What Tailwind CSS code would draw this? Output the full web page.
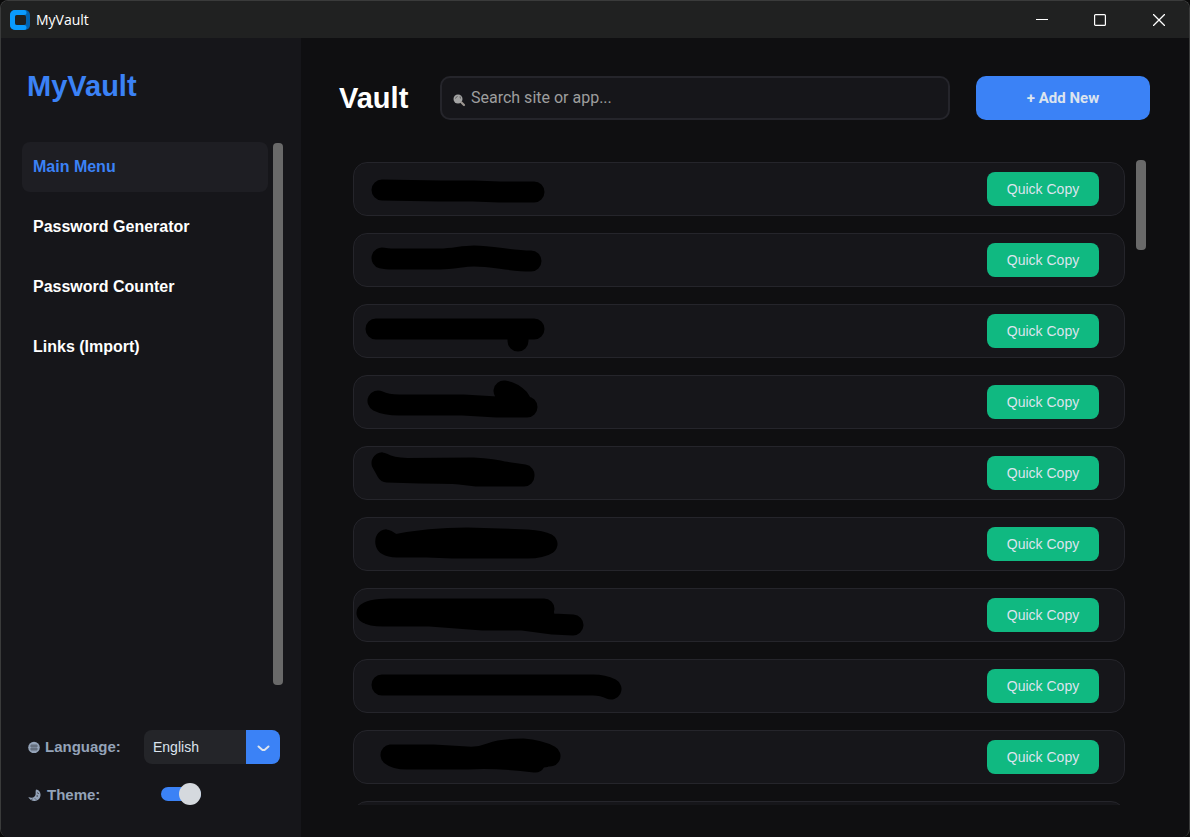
<!DOCTYPE html>
<html lang="en">
<head>
  <meta charset="UTF-8">
  <meta name="viewport" content="width=device-width, initial-scale=1.0">
  <title>MyVault</title>
  <script src="https://cdn.jsdelivr.net/npm/@tailwindcss/browser@4"></script>
</head>
<body class="bg-[#0a0a0a] font-['Liberation_Sans',Arial,sans-serif]">
<div class="h-screen flex flex-col overflow-hidden rounded-lg border border-[#3a3b3b] border-b-0 bg-[#0f0f11] text-white">

  <!-- Title bar -->
  <header class="flex h-[37px] shrink-0 items-center bg-[#202121] pl-2">
    <svg class="size-[22px]" viewBox="0 0 22 22">
      <rect x="1" y="1" width="20" height="20" rx="5" fill="#0062b1"/>
      <path d="M6 1h9a2.500 2.500 0 0 1 0 5H8a2 2 0 0 0-2 2v6a2 2 0 0 0 2 2h7a2.500 2.500 0 0 1 0 5H6a5 5 0 0 1-5-5V6a5 5 0 0 1 5-5z" fill="#0a9bff"/>
      <rect x="6" y="6" width="11" height="10" rx="2" fill="#202121"/>
    </svg>
    <span class="ml-[5px] flex-1 font-['Open_Sans',sans-serif] text-sm">MyVault</span>
    <button aria-label="Minimize" class="flex h-full w-[58px] items-center justify-center">
      <svg class="size-3" viewBox="0 0 12 12" stroke="#fff"><path d="M0 5.500h12"/></svg>
    </button>
    <button aria-label="Maximize" class="flex h-full w-[58px] items-center justify-center">
      <svg class="size-3" viewBox="0 0 12 12" fill="none" stroke="#fff" stroke-width="1.200"><rect x=".6" y=".6" width="10.800" height="10.800" rx="1"/></svg>
    </button>
    <button aria-label="Close" class="flex h-full w-[60px] items-center justify-center">
      <svg class="size-3" viewBox="0 0 12 12" stroke="#fff" stroke-width="1.300"><path d="M0 0l12 12M12 0L0 12"/></svg>
    </button>
  </header>

  <div class="flex min-h-0 flex-1">
    <!-- Sidebar -->
    <aside class="flex w-[300px] shrink-0 flex-col bg-[#16161a]">
      <h1 class="px-[26px] pt-8 text-[29px]/8 font-bold text-[#3b82f6]">MyVault</h1>
      <div class="mt-10 mb-11 flex min-h-0 flex-1 gap-[5px] pl-[21px]">
        <nav class="flex w-[246px] flex-col gap-2.5 font-bold">
          <a href="#" class="flex h-[50px] items-center rounded-lg bg-[#1e1e23] px-[11px] text-[#3b82f6]">Main Menu</a>
          <a href="#" class="flex h-[50px] items-center rounded-lg px-[11px]">Password Generator</a>
          <a href="#" class="flex h-[50px] items-center rounded-lg px-[11px]">Password Counter</a>
          <a href="#" class="flex h-[50px] items-center rounded-lg px-[11px]">Links (Import)</a>
        </nav>
        <div class="my-px w-2.5 rounded bg-[#696969]"></div>
      </div>
      <div class="flex flex-col gap-[14px] pr-[21px] pb-[25px] pl-5 text-sm">
        <div class="flex h-[34px] items-center justify-between">
          <label for="language" class="flex items-center gap-[5px] pl-[7px] text-[15px] font-bold text-[#94a3b8]">
            <svg class="size-3" viewBox="0 0 12 12" fill="none">
              <circle cx="6" cy="6.500" r="5.800" fill="#94a3b8"/>
              <path d="M2 5h8M2 8h8M4 3v7M6 3v7M8 3v7" stroke="#16161a" stroke-opacity=".5" stroke-width=".8"/>
            </svg>
            Language:
          </label>
          <div class="relative w-[136px]">
            <select id="language" class="h-[34px] w-full appearance-none rounded-lg bg-[#242529] pl-[9px] text-[#dce4ee]">
              <option>English</option>
            </select>
            <span class="pointer-events-none absolute inset-y-0 right-0 flex w-[34px] items-center justify-center rounded-r-lg bg-[#3b82f6]">
              <svg class="mt-0.5 h-[7px] w-[13px]" viewBox="0 0 13 7" fill="none" stroke="#dce4ee" stroke-width="2" stroke-linecap="round" stroke-linejoin="round"><path d="M1.500 1.500l4 3.500h2l4-3.500"/></svg>
            </span>
          </div>
        </div>
        <div class="flex h-[34px] items-center">
          <label for="theme" class="flex w-[140px] items-center gap-[6px] pl-[7px] text-[15px] font-bold text-[#94a3b8]">
            <svg class="mt-0.5 size-[13px]" viewBox="0 0 13 13" fill="none">
              <path d="M8 .5C12 1 13.500 5 12 8.500C10 13 3 13.500 .3 8C3 9 5 9 6.500 7.500C8.500 5.500 7 3 8 .5z" fill="#94a3b8"/>
              <path d="M9.500 3.500l1 1.500M10 7H8.500M7 9.500l1 1M4.500 10l-1 .5" stroke="#16161a" stroke-width=".8"/>
            </svg>
            Theme:
          </label>
          <input id="theme" type="checkbox" checked class="relative -mt-0.5 h-[14px] w-10 appearance-none rounded-full bg-[#4a4d50] checked:bg-[#3b82f6] before:absolute before:-top-1 before:left-0 before:size-[22px] before:rounded-full before:bg-[#d5d9de] checked:before:left-[18px]">
        </div>
      </div>
    </aside>

    <!-- Vault -->
    <main class="flex min-w-0 flex-1 flex-col pt-[38px] pr-[39px] pb-8 pl-[38px]">
      <div class="flex items-center">
        <h2 class="w-[101px] text-[29px]/8 font-bold">Vault</h2>
        <div class="flex h-11 flex-1 items-center gap-[5px] rounded-[10px] border-2 border-[#25252b] bg-[#16161a] px-[11px]">
          <svg class="mt-1 size-[13px]" viewBox="0 0 13 13" fill="none">
            <circle cx="5" cy="5" r="4.500" fill="#a3a3a3"/>
            <path d="M8.500 8.500l2.500 2.500" stroke="#9c9690" stroke-width="2.200" stroke-linecap="round"/>
            <path d="M2.500 4.500a3 3 0 0 1 2-2M7 2.500l.5 2" stroke="#5a5a5a"/>
          </svg>
          <input type="search" aria-label="Search" placeholder="Search site or app..." class="min-w-0 flex-1 bg-transparent font-[Roboto,sans-serif] text-base placeholder:text-[#9e9e9e] focus:outline-none">
        </div>
        <button class="ml-[26px] h-11 w-[174px] rounded-[10px] bg-[#3b82f6] font-[Roboto,sans-serif] text-[15px] font-bold text-[#dce4ee]">+ Add New</button>
      </div>
      <div class="mt-10 flex min-h-0 flex-1 gap-[11px] pr-1 pl-[14px]">
        <ul id="vaultList" class="flex min-w-0 flex-1 flex-col gap-[17px] overflow-hidden pt-0.5"></ul>
        <div class="h-[90px] w-2.5 rounded bg-[#696969]"></div>
      </div>
    </main>
  </div>
</div>

<script>
// marker strokes that hide each entry name
const entries = [
  "M28 27L86 28H119L146 29H180",
  "M28 24Q32 25 40 25H86C100 25 108 22 120 22C140 22 155 27 177 27",
  "M22 24H180M164 25V36",
  "M24 25Q32 29 45 29H109L143 31L173 31M150 15Q158 16 165 23L170 31",
  "M28 16L33 25L66 26Q95 26 106 27L123 29H170M28 16Q36 21 53 21.500L119 21Q140 22 150 25L170 28",
  "M32 22Q30 29 43 29L73 29L99 30H173Q187 30 193 26M32 22L40 27Q75 20 113 20L146 21L173 22Q187 23 193 26M50 26H185",
  "M13 24Q17 20 36 20H190M13 24Q18 27 29 27H76L129 31H169L199 35L219 36M100 26H190",
  "M28 25H239Q249 25 257 29",
  "M37 24H79L113 26Q126 27 138 22Q148 18 169 18Q185 19 196 25M37 24Q42 28 53 28H113Q140 26 181 31L184 26M120 26H190"
];

const card = "flex h-[54px] shrink-0 items-center justify-between rounded-[14px] border border-[#25252b] bg-[#16161a] pr-[25px]";

document.getElementById('vaultList').innerHTML = entries.map(d => `
  <li class="${card}">
    <svg class="h-[52px] w-[280px]" viewBox="0 0 280 52" fill="none" stroke="#000" stroke-width="21" stroke-linecap="round" stroke-linejoin="round"><path d="${d}"/></svg>
    <button class="h-[34px] w-28 rounded-lg bg-[#10b981] text-sm text-[#dce4ee]">Quick Copy</button>
  </li>`).join('') + `<li class="${card}"></li>`;
</script>
</body>
</html>
